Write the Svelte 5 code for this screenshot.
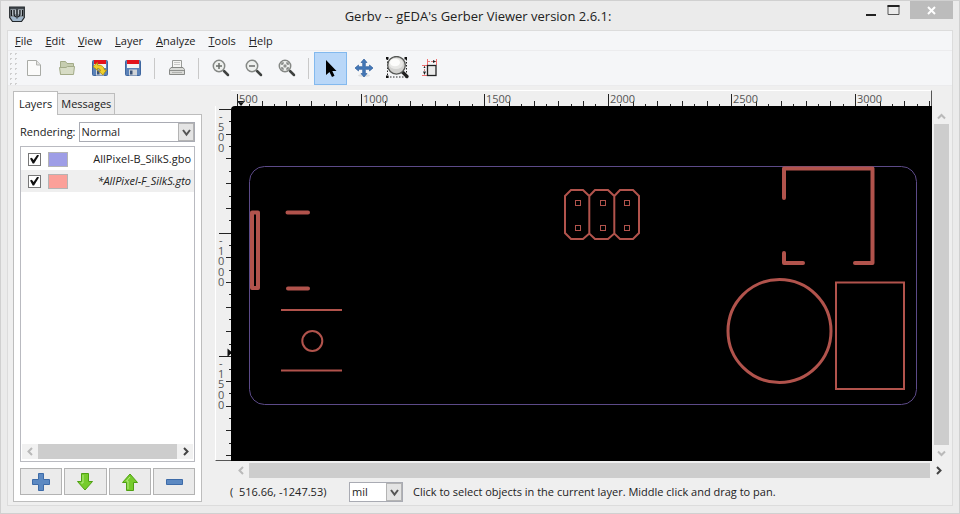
<script>
  const menus = ['File', 'Edit', 'View', 'Layer', 'Analyze', 'Tools', 'Help'];
  const toolGroups = [
    ['New', 'Open', 'Revert', 'Save'],
    ['Print'],
    ['Zoom in', 'Zoom out', 'Fit'],
    ['Pointer', 'Pan', 'Zoom area', 'Measure']
  ];
  let tool = $state('Pointer');
  let layers = $state([
    { name: 'AllPixel-B_SilkS.gbo', color: '#9e9de6', visible: true, active: false },
    { name: '*AllPixel-F_SilkS.gto', color: '#fba099', visible: true, active: true }
  ]);
  const step = 123.6;
  const makeTicks = (start, count) =>
    Array.from({ length: count }, (_, i) => ({
      at: Math.round(start + (i * step) / 10),
      size: i % 10 === 0 ? 13 : i % 2 === 0 ? 6 : 3
    }));
  const xTicks = makeTicks(6, 57);
  const yTicks = makeTicks(3, 29);
  const xLabels = [500, 1000, 1500, 2000, 2500, 3000];
  const yLabels = ['-500', '-1000', '-1500'];
  const pads = [347, 372, 396].flatMap((x) => [97, 122].map((y) => ({ x, y })));
</script>

{#snippet chevron(d)}
  <svg width="9" height="9" viewBox="0 0 9 9"><path {d} fill="none" stroke="currentColor" stroke-width="2" /></svg>
{/snippet}

{#snippet lens()}
  <path d="M14 14 18 18" stroke="#3f4240" stroke-width="2.500" stroke-linecap="round" />
  <circle cx="9" cy="9" r="5.700" fill="#eef0ee" stroke="#858885" stroke-width="1.500" />
{/snippet}

{#snippet toolIcon(name)}
  <svg width="24" height="24" viewBox="-1 -1 24 24" fill="none">
    {#if name === 'New'}
      <path d="M4.500 3.500H13.500L17.500 8V18.500H4.500Z" fill="#fbfbfa" stroke="#a9aba6" />
      <path d="M13.500 3.500V8H17.500" fill="#e3e3e0" stroke="#b4b5b1" />
    {:else if name === 'Open'}
      <path d="M4.500 17.500V4.500H9.500L11 6.500H17.500V10" fill="#c6cdb0" stroke="#a3ab88" />
      <path d="M3.500 10.500H10L11.500 9.500H18.500L17.500 17.500H4.500Z" fill="#d7dcc5" stroke="#a3ab88" />
    {:else if name === 'Save' || name === 'Revert'}
      <rect x="3.500" y="3.500" width="15" height="15" rx="1" fill="#5b82b8" stroke="#3f67a0" />
      <rect x="5" y="3" width="12" height="4" fill="#e3131c" />
      <rect x="5" y="7" width="12" height="4" fill="#f3f4f5" />
      <rect x="7" y="12.500" width="8" height="6" fill="#d0d4d8" />
      <rect x="8" y="13.500" width="2.500" height="4" fill="#3a5277" />
      {#if name === 'Revert'}
        <path d="M4 9.500 8.500 5.500V8C13 8 15 10 15.500 13H17.500L14 18 9.500 14H11.500C11.500 12.500 10.500 11.500 8.500 11.500V13.500Z" fill="#efcf2c" stroke="#a8890a" stroke-width=".8" />
      {/if}
    {:else if name === 'Print'}
      <path d="M6.500 10V3.500H15.500V10" fill="#f5f5f3" stroke="#999b98" />
      <path d="M8 5.500H14M8 7.500H14" stroke="#c8c8c6" />
      <path d="M5 10.500H17L18.500 12.500V17.500H3.500V12.500Z" fill="#d9dad7" stroke="#878986" />
      <path d="M4 13.500H18" stroke="#8e908d" />
      <path d="M6 15.500H16" stroke="#b1b2af" />
    {:else if name === 'Zoom in'}
      {@render lens()}<path d="M9 6V12M6 9H12" stroke="#6a6d6a" stroke-width="1.500" />
    {:else if name === 'Zoom out'}
      {@render lens()}<path d="M6 9H12" stroke="#6a6d6a" stroke-width="1.500" />
    {:else if name === 'Fit'}
      {@render lens()}
      <path d="M6 8V6H8M10 6H12V8M12 10V12H10M8 12H6V10" stroke="#6a6d6a" stroke-width="1.200" />
      <rect x="7.500" y="7.500" width="3" height="3" fill="#8f918f" />
    {:else if name === 'Pointer'}
      <path d="M6 3V18L9.500 15 12 20 14.500 18.800 12.300 14H16.500Z" fill="#000" />
    {:else if name === 'Pan'}
      <ellipse cx="11" cy="18.500" rx="6" ry="1.500" fill="#dcdedf" />
      <path d="M11 2 14 5.500H12.300V9.700H16.500V8L20 11 16.500 14V12.300H12.300V16.500H14L11 20 8 16.500H9.700V12.300H5.500V14L2 11 5.500 8V9.700H9.700V5.500H8Z" fill="#4478b8" stroke="#2f5f9c" stroke-width=".7" />
    {:else if name === 'Zoom area'}
      <path d="M1.500 1.500V20H20.500V1.500" stroke="#222" stroke-dasharray="1.500 1.500" />
      <path d="M0 0H2.500V2.500H0ZM18.500 0H21V2.500H18.500ZM0 18.500H2.500V21H0Z" fill="#111" />
      <path d="M16.500 15 21 19.500" stroke="#222" stroke-width="3.200" stroke-linecap="round" />
      <circle cx="10.500" cy="8.300" r="8.800" fill="#d2d2d0" stroke="#555755" stroke-width="1.300" />
      <ellipse cx="10" cy="6.500" rx="7" ry="5.500" fill="#e8e8e6" />
      <ellipse cx="9" cy="5.500" rx="5" ry="3.800" fill="#fcfcfb" />
    {:else}
      <path d="M3 8.500H9M3 18.500H9M8.500 2V8M17.500 2V8" stroke="#f07070" />
      <rect x="8.500" y="8.500" width="8.500" height="10" fill="#ebebeb" stroke="#222" stroke-width="1.300" />
      <path d="M9 4.500H17M5.500 9V18" stroke="#e08080" stroke-dasharray="2 1" />
      <path d="M14 3 17 4.500 14 6ZM4 14.500H7L5.500 18ZM4.500 11H6.500L5.500 9Z" fill="#222" />
    {/if}
  </svg>
{/snippet}

<div class="window">
  <header class="titlebar">
    <svg class="logo" width="16" height="17" viewBox="0 0 16 17">
      <path d="M.700 1H15.300V11.500L12.500 15.500H3.500L.700 11.500Z" fill="#8a939a" stroke="#23282c" stroke-width="1.200" />
      <path d="M1.500 11H14.500L12 15H4Z" fill="#9fb5c9" />
      <path d="M1 2H15" stroke="#2b3034" stroke-width="1.500" />
      <path d="M5 4V8Q5 10.500 7 11M8 3V12.500M11 4V8Q11 10.500 9 11M2.500 4V10M13.500 4V10" fill="none" stroke="#15181b" stroke-width="1.200" />
      <path d="M6.500 4V8M9.500 4V8M3.700 4V9M12.300 4V9" stroke="#c8ced3" stroke-width=".8" />
    </svg>
    <h1>Gerbv -- gEDA's Gerber Viewer version 2.6.1:</h1>
    <div class="wincontrols">
      <button aria-label="Minimize"><svg width="12" height="12"><path d="M1 11H11" stroke="#222" stroke-width="2" /></svg></button>
      <button aria-label="Maximize"><svg width="13" height="12"><path d="M1 1.500V10.500H12V1.500" fill="none" stroke="#555" /><path d="M.5 2H12.500" stroke="#222" stroke-width="2" /></svg></button>
      <button class="close" aria-label="Close"><svg width="9" height="9"><path d="M1 1 8 8M8 1 1 8" stroke="#fff" stroke-width="2" /></svg></button>
    </div>
  </header>

  <div class="client">
    <nav class="menubar">
      {#each menus as menu}<button><u>{menu[0]}</u>{menu.slice(1)}</button>{/each}
    </nav>

    <div class="toolbar">
      <div class="grip"></div>
      {#each toolGroups as group, i}
        {#if i}<div class="sep"></div>{/if}
        {#each group as name}
          <button aria-label={name} class:selected={tool === name} onclick={() => { if (i === 3) tool = name; }}>{@render toolIcon(name)}</button>
        {/each}
      {/each}
    </div>

    <main>
      <aside>
        <div class="tabs">
          <button class="active">Layers</button>
          <button>Messages</button>
        </div>
        <div class="panel">
          <div class="rendering">
            <label for="rendering">Rendering:</label>
            <div class="combo">
              <select id="rendering"><option>Normal</option><option>Fast</option></select>
              <span>{@render chevron('M1 2 4.500 6.500 8 2')}</span>
            </div>
          </div>
          <div class="list">
            <div class="rows">
              {#each layers as layer}
                <label class="row" class:current={layer.active}>
                  <input type="checkbox" bind:checked={layer.visible} />
                  <span class="swatch" style:background={layer.color}></span>
                  <span class="name">{layer.name}</span>
                </label>
              {/each}
            </div>
            <div class="hscroll small">
              <button class="dim" aria-label="Scroll left">{@render chevron('M6 1 2.500 4.500 6 8')}</button>
              <div class="thumb"></div>
              <button aria-label="Scroll right">{@render chevron('M3 1 6.500 4.500 3 8')}</button>
            </div>
          </div>
          <div class="actions">
            <button aria-label="Add layer"><svg width="20" height="20"><path d="M7.500 1.500H12.500V7.500H18.500V12.500H12.500V18.500H7.500V12.500H1.500V7.500H7.500Z" fill="#5c89c2" stroke="#3d6ba8" /></svg></button>
            <button aria-label="Move layer down"><svg width="20" height="20"><path d="M6.500 1.500H13.500V9.500H17.500L10 18 2.500 9.500H6.500Z" fill="#76cb2c" stroke="#4fa012" /><path d="M8 3V11H6" fill="none" stroke="#b4ec82" /></svg></button>
            <button aria-label="Move layer up"><svg width="20" height="20"><path d="M6.500 18.500H13.500V10.500H17.500L10 2 2.500 10.500H6.500Z" fill="#76cb2c" stroke="#4fa012" /><path d="M8 17V9H6.500L10 5" fill="none" stroke="#b4ec82" /></svg></button>
            <button aria-label="Remove layer"><svg width="20" height="20"><path d="M2.500 7.500H18.500V12.500H2.500Z" fill="#5c89c2" stroke="#3d6ba8" /></svg></button>
          </div>
        </div>
      </aside>

      <section>
        <div class="view">
          <svg class="xruler" aria-label="Horizontal ruler">
            <path class="marker" d="M6 10H14L10 15Z" />
            {#each xTicks as t}<path d="M{t.at + 0.5} {16 - t.size}V16" />{/each}
            {#each xLabels as label, i}<text x={8 + Math.round(i * step)} y="12">{label}</text>{/each}
          </svg>
          <svg class="yruler" aria-label="Vertical ruler">
            {#each yTicks as t}<path d="M{16 - t.size} {t.at + 0.5}H16" />{/each}
            {#each yLabels as label, i}
              {#each label as ch, j}<text x={ch === '-' ? 3 : 2} y={14 + Math.round(i * step) + Math.round(j * 10.6)}>{ch}</text>{/each}
            {/each}
            <path class="marker" d="M11.500 242.500V251L16 246.500Z" />
          </svg>
          <div class="canvas">
            <svg aria-label="Board view">
              <rect class="edge" x="18.500" y="60.500" width="667" height="238" rx="15" />
              <g class="thick">
                <rect x="21" y="106.500" width="6" height="75.500" />
                <path d="M56.500 106.500H77M57 182.500H77" />
                <path d="M553 92V62.500H641.500V157H624M553 147V157H572" />
              </g>
              <circle class="mid" cx="548.500" cy="225" r="51.500" />
              <g class="thin">
                <path d="M50 204H111M50 264.500H111" />
                <circle cx="81.300" cy="235" r="10" />
                <rect x="605" y="176.500" width="68" height="106.500" />
                <path d="M334 90 340 84H352L358.300 90 364 84H377L383.300 90 389 84H402L408 90V127L402 133H389L383.300 127.500 377 133H364L358.300 127.500 352 133H340L334 127ZM358.300 90V127.500M383.300 90V127.500" />
              </g>
              <g class="pads">
                {#each pads as p}<rect x={p.x - 2.5} y={p.y - 2.5} width="5" height="5" />{/each}
              </g>
            </svg>
          </div>
          <div class="vscroll">
            <button class="dim" aria-label="Scroll up">{@render chevron('M1 6.500 4.500 3 8 6.500')}</button>
            <div class="thumb"></div>
            <button class="dim" aria-label="Scroll down">{@render chevron('M1 2.500 4.500 6 8 2.500')}</button>
          </div>
        </div>
        <div class="hscroll">
          <button class="dim" aria-label="Scroll left">{@render chevron('M6 1 2.500 4.500 6 8')}</button>
          <div class="thumb"></div>
          <button aria-label="Scroll right">{@render chevron('M3 1 6.500 4.500 3 8')}</button>
        </div>
        <footer>
          <output>(&nbsp; 516.66, -1247.53)</output>
          <div class="combo unit">
            <select aria-label="Unit"><option>mil</option><option>mm</option><option>in</option></select>
            <span>{@render chevron('M1 2 4.500 6.500 8 2')}</span>
          </div>
          <p>Click to select objects in the current layer. Middle click and drag to pan.</p>
        </footer>
      </section>
    </main>
  </div>
</div>

<style>
  :global(body) { margin: 0; }
  * { box-sizing: border-box; }
  .window {
    display: flex; flex-direction: column; min-height: 100vh; padding: 0 6px 7px;
    background: #ebebeb; border: 1px solid #d0d0d0;
    font: 11px/16px 'Open Sans', 'Noto Sans', sans-serif; color: #222;
  }
  button, select { font: inherit; color: inherit; border: 0; padding: 0; margin: 0; background: none; }
  button { display: flex; align-items: center; justify-content: center; }
  svg { display: block; flex: none; }
  h1, p { margin: 0; font-weight: 400; }

  .titlebar { position: relative; display: flex; align-items: center; justify-content: center; height: 29px; padding-right: 4px; }
  .logo { position: absolute; left: 2px; top: 5px; }
  h1 { font-size: 13px; }
  .wincontrols { position: absolute; top: 0; right: 0; display: flex; gap: 10px; height: 18px; }
  .close { width: 43px; background: #bcbcbc; }

  .client { flex: 1; display: flex; flex-direction: column; background: #efefef; border: 1px solid #dcdcdc; }
  .menubar { display: flex; gap: 13px; height: 19px; padding-left: 7px; background: #f5f6f8; }
  .toolbar { display: flex; align-items: center; height: 36px; background: #f5f6f8; border-top: 1px solid #ececee; border-bottom: 1px solid #ebebed; }
  .grip { width: 9px; height: 34px; background: radial-gradient(circle, #cfcfcf 1px, transparent 1px) 0 0 / 5px 5px; }
  .toolbar button { width: 33px; height: 33px; border: 1px solid transparent; }
  .toolbar .selected { background: #b9d7f8; border-color: #83b9ee; }
  .sep { width: 1px; height: 21px; margin: 0 5px; background: #c9c9c9; }

  main { flex: 1; display: flex; gap: 13px; padding: 4px 3px 3px 5px; }
  aside { width: 189px; display: flex; flex-direction: column; padding-top: 1px; }
  .tabs { display: flex; align-items: flex-end; }
  .tabs button { height: 21px; padding: 0 3px; border: 1px solid #bdbdbd; border-bottom: 0; border-left: 0; background: #ebebeb; }
  .tabs .active { position: relative; height: 24px; padding: 0 5px; margin-bottom: -1px; border-left: 1px solid #bdbdbd; background: #fff; }
  .panel { flex: 1; display: flex; flex-direction: column; padding: 7px 6px 6px; background: #fff; border: 1px solid #bdbdbd; }
  .rendering { display: flex; align-items: center; justify-content: flex-end; gap: 3px; }
  .combo { position: relative; width: 119px; height: 20px; border: 1px solid #a9abb3; background: #fff; }
  .combo select { display: block; width: 100%; height: 18px; padding: 0 18px 0 2px; appearance: none; }
  .combo span {
    position: absolute; top: 0; right: 0; width: 16px; height: 18px; display: flex; align-items: center; justify-content: center;
    background: #e4e4e4; border: 1px solid #b4b4b4; color: #555; pointer-events: none;
  }
  .list { flex: 1; display: flex; flex-direction: column; margin-top: 4px; border: 1px solid #b9bac0; }
  .rows { flex: 1; padding-top: 1px; }
  .row { display: flex; align-items: center; height: 22px; padding-left: 7px; }
  .current { background: #efefef; font-style: italic; }
  .row input { appearance: none; width: 13px; height: 13px; margin: 0; border: 1px solid #777; background: #fff; }
  .row input:checked::before {
    content: ''; display: block; width: 9px; height: 9px; margin: 1px; background: #111;
    clip-path: polygon(0 45%, 20% 35%, 40% 62%, 82% 0, 100% 10%, 45% 100%, 30% 100%);
  }
  .swatch { width: 20px; height: 15px; margin: 0 22px 0 7px; border: 1px solid #b4b4b4; }
  .name { flex: 1; text-align: right; white-space: nowrap; padding-right: 3px; }
  .hscroll { display: flex; height: 15px; margin: 2px 3px 0 18px; color: #444; }
  .hscroll button { width: 16px; }
  .dim { color: #b9b9b9; }
  .thumb { flex: 1; background: #cdcdcd; }
  .small { margin: 0 1px 2px; background: #f1f1f1; }
  .actions { display: grid; grid-template-columns: repeat(4, 1fr); gap: 2px; margin-top: 6px; }
  .actions button { height: 27px; border: 1px solid #b3b3b3; background: #ebebeb; }

  section { flex: 1; min-width: 0; display: flex; flex-direction: column; }
  .view { flex: 1; display: grid; grid-template: 16px 1fr / 16px 1fr 17px; }
  .xruler { grid-column: 2; width: 100%; height: 16px; border-right: 1px solid #555; border-top: 1px solid #fff; }
  .yruler { grid-column: 1; grid-row: 2; width: 16px; height: 100%; border-left: 1px solid #fff; border-bottom: 1px solid #555; }
  .view path { stroke: #222; fill: none; }
  .view text { font-size: 11px; fill: #555; }
  .view .marker { fill: #111; stroke: none; }
  .canvas { grid-column: 2; grid-row: 2; position: relative; overflow: hidden; background: #000; border-radius: 4px 0 0; }
  .canvas svg { position: absolute; inset: 0; width: 100%; height: 100%; fill: none; }
  .canvas svg * { stroke: #b1534c; fill: none; }
  .canvas svg .edge { stroke: #5c4a88; stroke-width: 1; }
  .thick { stroke-width: 4; stroke-linecap: round; stroke-linejoin: round; }
  .mid { stroke-width: 3; }
  .thin { stroke-width: 2; }
  .pads { stroke-width: 1; }
  .vscroll { grid-column: 3; grid-row: 2; display: flex; flex-direction: column; margin: 2px 0 0 2px; }
  .vscroll button { height: 16px; }
  .view .vscroll path, .hscroll path { stroke: currentColor; }
  footer { display: flex; align-items: center; height: 20px; margin: 4px 0 0 15px; }
  output { width: 119px; }
  .unit { width: 54px; margin-right: 10px; }
</style>
